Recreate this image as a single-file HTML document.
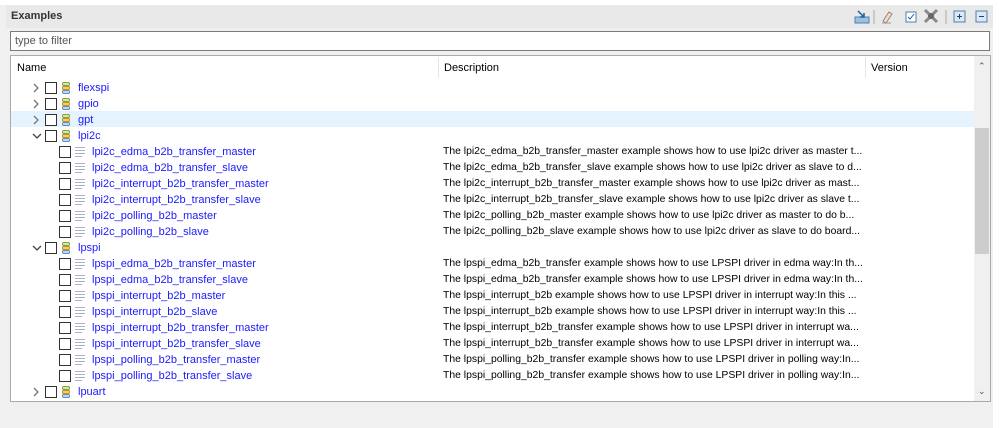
<!DOCTYPE html><html><head><style>
*{margin:0;padding:0;box-sizing:border-box}
body{width:999px;height:428px;background:#f0f0f0;font-family:"Liberation Sans",sans-serif;font-size:11px;position:relative;overflow:hidden}
.abs{position:absolute}
.row{position:absolute;left:11px;width:963px;height:16px}
.cb{position:absolute;width:12px;height:12px;border:1px solid #333;background:#fff;top:2px}
.nm{position:absolute;top:2px;color:#1a1aff;white-space:nowrap}
.ds{position:absolute;left:432px;top:2px;width:420px;white-space:nowrap;overflow:hidden;color:#000;font-size:10.4px}
.chev{position:absolute;top:3px;left:22px;width:6px;height:10px}
.li{position:absolute;left:64px;top:3px;width:10px;height:10px}
.li i{display:block;height:1px;background:#a8b0c8;margin-bottom:2px}
.gi{position:absolute;left:51px;top:2px;width:8px;height:12px}
</style></head><body>
<div class="abs" style="left:0;top:0;width:999px;height:5px;background:#fff"></div>
<div class="abs" style="left:993px;top:0;width:6px;height:428px;background:#fff"></div>
<div class="abs" style="left:6px;top:5px;width:987px;height:23px;background:#e9e9e9"></div>
<div class="abs" style="left:11px;top:10px;font-weight:bold;color:#333;font-size:11px">Examples</div>
<svg class="abs" style="left:850px;top:6px" width="145" height="20">
<rect x="5" y="11" width="14" height="6" fill="#9cc0e0" stroke="#4f7fb0"/><path d="M8 5 L14 11 M14 7 L14 11 L10 11" stroke="#1f5f9f" stroke-width="1.5" fill="none"/>
<line x1="24" y1="4" x2="24" y2="18" stroke="#aaa"/>
<path d="M33 15 L39 6 L42 8 L36 17 Z" fill="#f0e0d0" stroke="#a08070"/><line x1="32" y1="17" x2="41" y2="17" stroke="#999"/>
<rect x="56" y="6" width="10" height="10" fill="#fff" stroke="#4f7fb0"/><path d="M58 11 L60 13 L64 8" stroke="#1f5f9f" fill="none"/>
<path d="M75 4 L87 16 M87 4 L75 16" stroke="#888" stroke-width="3"/><circle cx="81" cy="10" r="3" fill="#666"/>
<line x1="96" y1="4" x2="96" y2="18" stroke="#aaa"/>
<rect x="104" y="5" width="11" height="11" fill="#dce8f4" stroke="#4f7fb0"/><path d="M107 10.5 H112 M109.5 8 V13" stroke="#1f3f7f"/>
<rect x="126" y="5" width="11" height="11" fill="#dce8f4" stroke="#4f7fb0"/><path d="M129 10.5 H134" stroke="#1f3f7f"/>
</svg>
<div class="abs" style="left:10px;top:31px;width:980px;height:20px;background:#fff;border:1px solid #7a7a7a"></div>
<div class="abs" style="left:15px;top:35px;color:#555">type to filter</div>
<div class="abs" style="left:10px;top:55px;width:981px;height:347px;background:#fff;border:1px solid #aaa"></div>
<div class="abs" style="left:17px;top:62px;color:#000">Name</div>
<div class="abs" style="left:438px;top:57px;width:1px;height:21px;background:#e5e5e5"></div>
<div class="abs" style="left:444px;top:62px">Description</div>
<div class="abs" style="left:865px;top:57px;width:1px;height:21px;background:#e5e5e5"></div>
<div class="abs" style="left:871px;top:62px">Version</div>
<div class="abs" style="left:974px;top:56px;width:16px;height:345px;background:#f0f0f0"></div>
<div class="abs" style="left:975px;top:128px;width:14px;height:126px;background:#cdcdcd"></div>
<div class="abs" style="left:978px;top:61px;font-size:9px;color:#555">&#8963;</div>
<div class="abs" style="left:978px;top:386px;font-size:9px;color:#555">&#8964;</div>
<div class="abs" style="left:11px;top:111px;width:963px;height:16px;background:#e5f3ff"></div>
<div id="rows"></div>
<script>
var R=[
[0,'flexspi','',0],[0,'gpio','',0],[0,'gpt','',0],[0,'lpi2c','',1],
[1,'lpi2c_edma_b2b_transfer_master','The lpi2c_edma_b2b_transfer_master example shows how to use lpi2c driver as master t...'],
[1,'lpi2c_edma_b2b_transfer_slave','The lpi2c_edma_b2b_transfer_slave example shows how to use lpi2c driver as slave to d...'],
[1,'lpi2c_interrupt_b2b_transfer_master','The lpi2c_interrupt_b2b_transfer_master example shows how to use lpi2c driver as mast...'],
[1,'lpi2c_interrupt_b2b_transfer_slave','The lpi2c_interrupt_b2b_transfer_slave example shows how to use lpi2c driver as slave t...'],
[1,'lpi2c_polling_b2b_master','The lpi2c_polling_b2b_master example shows how to use lpi2c driver as master to do b...'],
[1,'lpi2c_polling_b2b_slave','The lpi2c_polling_b2b_slave example shows how to use lpi2c driver as slave to do board...'],
[0,'lpspi','',1],
[1,'lpspi_edma_b2b_transfer_master','The lpspi_edma_b2b_transfer example shows how to use LPSPI driver in edma way:In th...'],
[1,'lpspi_edma_b2b_transfer_slave','The lpspi_edma_b2b_transfer example shows how to use LPSPI driver in edma way:In th...'],
[1,'lpspi_interrupt_b2b_master','The lpspi_interrupt_b2b example shows how to use LPSPI driver in interrupt way:In this ...'],
[1,'lpspi_interrupt_b2b_slave','The lpspi_interrupt_b2b example shows how to use LPSPI driver in interrupt way:In this ...'],
[1,'lpspi_interrupt_b2b_transfer_master','The lpspi_interrupt_b2b_transfer example shows how to use LPSPI driver in interrupt wa...'],
[1,'lpspi_interrupt_b2b_transfer_slave','The lpspi_interrupt_b2b_transfer example shows how to use LPSPI driver in interrupt wa...'],
[1,'lpspi_polling_b2b_transfer_master','The lpspi_polling_b2b_transfer example shows how to use LPSPI driver in polling way:In...'],
[1,'lpspi_polling_b2b_transfer_slave','The lpspi_polling_b2b_transfer example shows how to use LPSPI driver in polling way:In...'],
[0,'lpuart','',0]];
var h='';
R.forEach(function(r,i){
var top=80+i*16;
h+='<div class="row" style="top:'+top+'px">';
if(r[0]==0){
 h+= r[3]? '<svg class="chev" style="left:21px;width:10px" viewBox="0 0 10 10"><path d="M1 3 L5 7 L9 3" stroke="#444" stroke-width="1.3" fill="none"/></svg>'
 : '<svg class="chev" viewBox="0 0 6 10"><path d="M1 1 L5 5 L1 9" stroke="#777" stroke-width="1.3" fill="none"/></svg>';
 h+='<div class="cb" style="left:34px"></div>';
 h+='<svg class="gi" viewBox="0 0 8 12"><rect x="0.5" y="0.5" width="7" height="3" rx="1.2" fill="#d8e8a0" stroke="#8aa040"/><rect x="0.5" y="4.5" width="7" height="3" rx="1.2" fill="#f0d070" stroke="#c09020"/><rect x="0.5" y="8.5" width="7" height="3" rx="1.2" fill="#c0d8f0" stroke="#6090c0"/></svg>';
 h+='<div class="nm" style="left:67px">'+r[1]+'</div>';
}else{
 h+='<div class="cb" style="left:48px"></div><div class="li"><i></i><i></i><i></i><i style="width:7px"></i></div>';
 h+='<div class="nm" style="left:81px">'+r[1]+'</div><div class="ds">'+r[2]+'</div>';
}
h+='</div>';});
document.getElementById('rows').innerHTML=h;
</script>
</body></html>
